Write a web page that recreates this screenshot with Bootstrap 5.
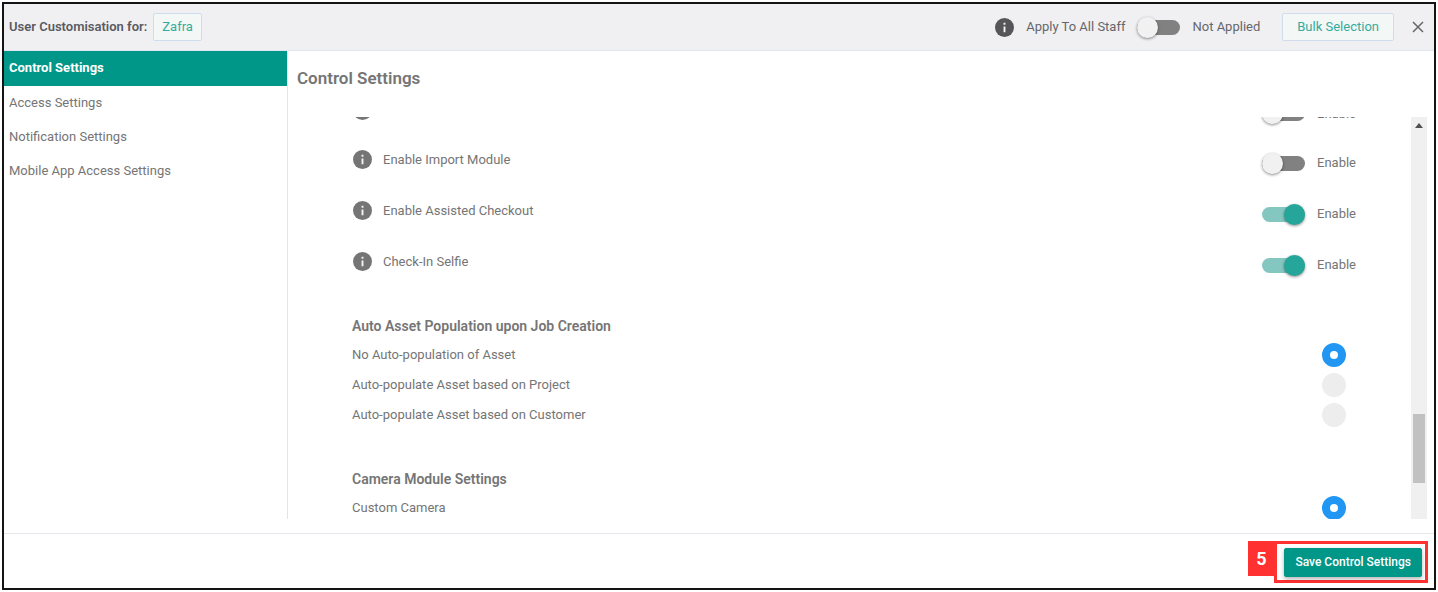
<!DOCTYPE html>
<html lang="en">
<head>
<meta charset="utf-8">
<meta name="viewport" content="width=device-width, initial-scale=1">
<title>User Customisation</title>
<link href="https://cdn.jsdelivr.net/npm/bootstrap@5.3.0/dist/css/bootstrap.min.css" rel="stylesheet">
<style>
  body { font: 13px/20px Roboto, sans-serif; color: #757575; background: #fff; }
  .window-frame { height: calc(100vh - 4px); margin: 2px; border: 2px solid #141414; }
  .top-bar { height: 47px; padding: 0 10px 0 5px; gap: 6px; background: #f0f0f3; border-bottom: 1px solid #dfe6f0; color: #5a5a60; }
  .top-bar .user-label { font-weight: 600; }
  .bar-tools { gap: 12px; color: #66666a; }
  .bar-tools .info-dot { color: #55555a; }
  .bar-actions { gap: 18px; margin-left: 16px; }
  .btn-soft { --bs-btn-color: #33ab9f; --bs-btn-bg: #f3f8f6; --bs-btn-border-color: #cfdcee; --bs-btn-hover-color: #00796b;
    height: 28px; padding: 0 8px; font-size: 13px; line-height: 26px; border-radius: 2px; }
  .btn-soft.wide { padding: 0 14px; }
  .close-x { width: 12px; height: 12px; color: #66666a; }
  .side-nav { width: 284px; border-right: 1px solid #e4e4e6; }
  .side-nav .nav-link { height: 34px; padding: 0 5px; line-height: 33px; color: #757575; border-radius: 0; }
  .side-nav .nav-link.active { height: 35px; background: #009688; color: #fff; font-weight: 700; }
  .page-title { margin: 0; padding: 17px 9px 0; height: 66px; font-size: 17px; line-height: 20px; font-weight: 600; }
  .scroll-pane { min-height: 0; margin-right: 7px; }
  .scroll-body { padding: 0 65px 0 64px; margin-top: -31px; }
  .main-zone { margin-bottom: 14px; }
  .toggle-row { height: 48px; gap: 11px; padding-left: 1px; }
  .toggle-row + .toggle-row { height: 51px; }
  .info-dot { width: 19px; height: 19px; flex: none; }
  .toggle-end { padding: 7px 0 0; gap: 12px; margin-right: -10px; }
  .lever { appearance: none; position: relative; width: 43px; height: 15px; margin: 0; border-radius: 8px; background: #818181; flex: none; }
  .lever::before { content: ""; position: absolute; left: 0; top: -3px; width: 21px; height: 21px; border-radius: 50%; background: #f1f1f1; box-shadow: 0 1px 3px rgba(0,0,0,.45); }
  .lever:checked { background: #84c7c1; }
  .lever:checked::before { left: 22px; background: #26a69a; }
  .group-title { margin: 24px 0 0; height: 29px; font-size: 14px; line-height: 30px; font-weight: 600; }
  .group-title.later { margin-top: 34px; }
  .choice-row { height: 30px; }
  .choice-row .form-check-input { width: 24px; height: 24px; margin: 0; border: 0; background: #ededed; flex: none; }
  .choice-row .form-check-input:checked { background: #fff; border: 8px solid #2196f3; }
  .track { width: 16px; background: #f0f0f0; padding: 6px 2px 36px; }
  .track svg { width: 8px; height: 5px; }
  .thumb { height: 69px; background: #c1c1c1; }
  .foot-bar { height: 55px; padding: 7px 6px 0; border-top: 1px solid #e6e6ec; }
  .step-no { width: 26px; height: 35px; background: #ff3131; color: #fff; font-weight: 700; font-size: 18px; line-height: 35px; }
  .step-box { height: 42px; border: 3px solid #ff3131; padding: 4px 3px 3px 7px; }
  .btn-save { --bs-btn-color: #fff; --bs-btn-bg: #009688; --bs-btn-border-color: #009688; --bs-btn-hover-bg: #00796b; --bs-btn-hover-color: #fff;
    height: 29px; padding: 0 10px; font-size: 12px; line-height: 27px; font-weight: 500; border-radius: 2px; box-shadow: 0 2px 4px rgba(0,0,0,.3); }
</style>
</head>
<body>
<svg class="d-none" aria-hidden="true">
  <symbol id="info" viewBox="0 0 20 20"><circle cx="10" cy="10" r="10" fill="currentColor"/><path d="M9 5h2v2H9zM9 9h2v6H9z" fill="#f4f4f4"/></symbol>
</svg>
<div class="window-frame d-flex flex-column overflow-hidden">
  <header class="top-bar d-flex align-items-center flex-shrink-0">
    <span class="user-label">User Customisation for:</span>
    <button type="button" class="btn btn-soft">Zafra</button>
    <div class="bar-tools d-flex align-items-center ms-auto">
      <svg class="info-dot"><use href="#info"/></svg>
      <label for="applyAll">Apply To All Staff</label>
      <input class="lever" type="checkbox" role="switch" id="applyAll">
      <span>Not Applied</span>
    </div>
    <div class="bar-actions d-flex align-items-center">
      <button type="button" class="btn btn-soft wide">Bulk Selection</button>
      <button type="button" class="btn p-0 border-0 d-flex" aria-label="Close"><svg class="close-x" viewBox="0 0 12 12"><path d="M1 1l10 10M11 1L1 11" stroke="currentColor" stroke-width="1.500"/></svg></button>
    </div>
  </header>
  <div class="main-zone d-flex flex-grow-1 overflow-hidden">
    <nav class="side-nav nav flex-column flex-nowrap flex-shrink-0">
      <a class="nav-link active" href="#">Control Settings</a>
      <a class="nav-link" href="#">Access Settings</a>
      <a class="nav-link" href="#">Notification Settings</a>
      <a class="nav-link" href="#">Mobile App Access Settings</a>
    </nav>
    <main class="d-flex flex-column flex-grow-1">
      <h1 class="page-title flex-shrink-0">Control Settings</h1>
      <div class="scroll-pane d-flex flex-grow-1 overflow-hidden">
        <div class="scroll-body flex-grow-1">
          <div class="toggle-row d-flex align-items-center"><svg class="info-dot"><use href="#info"/></svg>
            <div class="toggle-end d-flex align-items-center ms-auto"><input class="lever" type="checkbox" role="switch" id="t1"><label for="t1">Enable</label></div></div>
          <div class="toggle-row d-flex align-items-center"><svg class="info-dot"><use href="#info"/></svg><span>Enable Import Module</span>
            <div class="toggle-end d-flex align-items-center ms-auto"><input class="lever" type="checkbox" role="switch" id="t2"><label for="t2">Enable</label></div></div>
          <div class="toggle-row d-flex align-items-center"><svg class="info-dot"><use href="#info"/></svg><span>Enable Assisted Checkout</span>
            <div class="toggle-end d-flex align-items-center ms-auto"><input class="lever" type="checkbox" role="switch" id="t3" checked><label for="t3">Enable</label></div></div>
          <div class="toggle-row d-flex align-items-center"><svg class="info-dot"><use href="#info"/></svg><span>Check-In Selfie</span>
            <div class="toggle-end d-flex align-items-center ms-auto"><input class="lever" type="checkbox" role="switch" id="t4" checked><label for="t4">Enable</label></div></div>
          <h2 class="group-title">Auto Asset Population upon Job Creation</h2>
          <div class="choice-row d-flex align-items-center justify-content-between"><label for="a1">No Auto-population of Asset</label><input class="form-check-input" type="radio" name="asset" id="a1" checked></div>
          <div class="choice-row d-flex align-items-center justify-content-between"><label for="a2">Auto-populate Asset based on Project</label><input class="form-check-input" type="radio" name="asset" id="a2"></div>
          <div class="choice-row d-flex align-items-center justify-content-between"><label for="a3">Auto-populate Asset based on Customer</label><input class="form-check-input" type="radio" name="asset" id="a3"></div>
          <h2 class="group-title later">Camera Module Settings</h2>
          <div class="choice-row d-flex align-items-center justify-content-between"><label for="c1">Custom Camera</label><input class="form-check-input" type="radio" name="camera" id="c1" checked></div>
        </div>
        <div class="track d-flex flex-column justify-content-between flex-shrink-0">
          <svg class="align-self-center" viewBox="0 0 8 5"><path d="M0 5l4-5 4 5z" fill="#505050"/></svg>
          <div class="thumb"></div>
        </div>
      </div>
    </main>
  </div>
  <footer class="foot-bar d-flex justify-content-end align-items-start flex-shrink-0">
    <span class="step-no text-center">5</span>
    <div class="step-box"><button type="button" class="btn btn-save d-block">Save Control Settings</button></div>
  </footer>
</div>
<script src="https://cdn.jsdelivr.net/npm/bootstrap@5.3.0/dist/js/bootstrap.bundle.min.js"></script>
</body>
</html>
